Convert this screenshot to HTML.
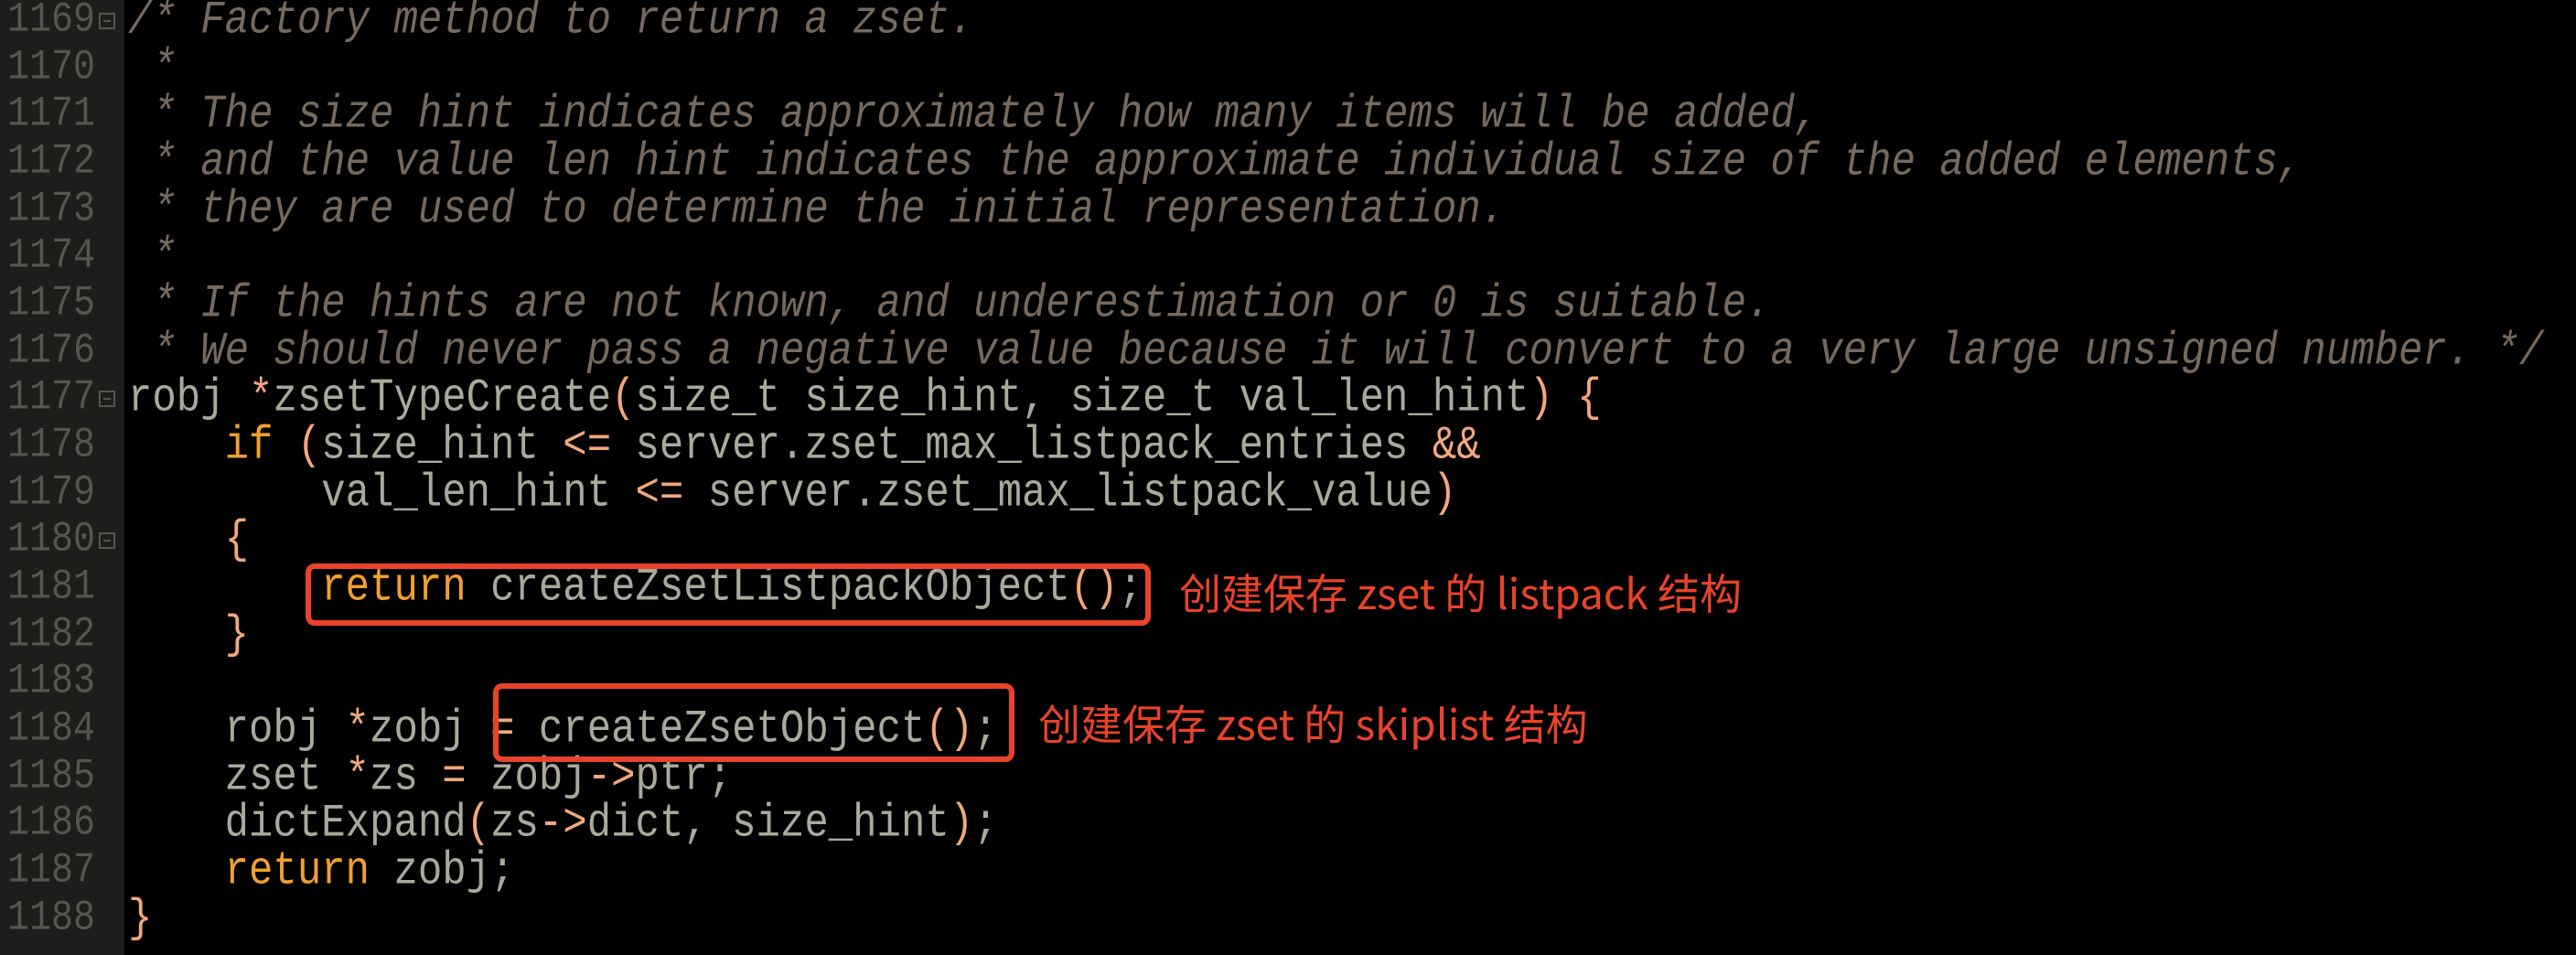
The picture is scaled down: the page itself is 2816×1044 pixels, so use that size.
<!DOCTYPE html>
<html><head><meta charset="utf-8"><style>
body{margin:0;width:2816px;height:1044px;background:#000;overflow:hidden;position:relative;font-family:"Liberation Mono",monospace;}
.g{position:absolute;left:0;top:0;width:136px;height:1044px;background:#1d1d1b;}
.ln{position:absolute;left:0;width:104px;text-align:right;color:#56564f;font-size:40px;height:52px;line-height:52px;transform:scaleY(1.15);}
.f{position:absolute;left:108px;width:18px;height:18px;border:2px solid #56564f;box-sizing:border-box;}
.f:after{content:"";position:absolute;left:3px;right:3px;top:6px;height:2px;background:#56564f;}
.c{position:absolute;left:140px;font-size:44px;white-space:pre;color:#aaa99c;height:52px;line-height:52px;transform:scaleY(1.15);transform-origin:0 50%;}
.cm{color:#76695e;font-style:italic;}
.k{color:#f0a030;}
.o{color:#f2a87c;}
.box{position:absolute;border:6px solid #e8432a;border-radius:10px;box-sizing:border-box;}
.a{position:absolute;color:#e8432a;font-family:"Noto Sans CJK SC",sans-serif;font-size:46px;white-space:nowrap;line-height:60px;}
</style></head><body>
<div class="g"></div>
<div class="c cm" style="top:-3px">/* Factory method to return a zset.</div>
<div class="c cm" style="top:49px"> *</div>
<div class="c cm" style="top:100px"> * The size hint indicates approximately how many items will be added,</div>
<div class="c cm" style="top:152px"> * and the value len hint indicates the approximate individual size of the added elements,</div>
<div class="c cm" style="top:204px"> * they are used to determine the initial representation.</div>
<div class="c cm" style="top:255px"> *</div>
<div class="c cm" style="top:307px"> * If the hints are not known, and underestimation or 0 is suitable.</div>
<div class="c cm" style="top:359px"> * We should never pass a negative value because it will convert to a very large unsigned number. */</div>
<div class="c" style="top:410px">robj <span class="o">*</span>zsetTypeCreate<span class="o">(</span>size_t size_hint, size_t val_len_hint<span class="o">)</span> <span class="o">{</span></div>
<div class="c" style="top:462px">    <span class="k">if</span> <span class="o">(</span>size_hint <span class="o">&lt;=</span> server.zset_max_listpack_entries <span class="o">&amp;&amp;</span></div>
<div class="c" style="top:514px">        val_len_hint <span class="o">&lt;=</span> server.zset_max_listpack_value<span class="o">)</span></div>
<div class="c" style="top:565px">    <span class="o">{</span></div>
<div class="c" style="top:617px">        <span class="k">return</span> createZsetListpackObject<span class="o">()</span>;</div>
<div class="c" style="top:669px">    <span class="o">}</span></div>
<div class="c" style="top:772px">    robj <span class="o">*</span>zobj <span class="o">=</span> createZsetObject<span class="o">()</span>;</div>
<div class="c" style="top:824px">    zset <span class="o">*</span>zs <span class="o">=</span> zobj<span class="o">-&gt;</span>ptr;</div>
<div class="c" style="top:875px">    dictExpand<span class="o">(</span>zs<span class="o">-&gt;</span>dict, size_hint<span class="o">)</span>;</div>
<div class="c" style="top:927px">    <span class="k">return</span> zobj;</div>
<div class="c" style="top:979px"><span class="o">}</span></div>
<div class="ln" style="top:-3px">1169</div><div class="ln" style="top:49px">1170</div><div class="ln" style="top:100px">1171</div><div class="ln" style="top:152px">1172</div><div class="ln" style="top:204px">1173</div><div class="ln" style="top:255px">1174</div><div class="ln" style="top:307px">1175</div><div class="ln" style="top:359px">1176</div><div class="ln" style="top:410px">1177</div><div class="ln" style="top:462px">1178</div><div class="ln" style="top:514px">1179</div><div class="ln" style="top:565px">1180</div><div class="ln" style="top:617px">1181</div><div class="ln" style="top:669px">1182</div><div class="ln" style="top:720px">1183</div><div class="ln" style="top:772px">1184</div><div class="ln" style="top:824px">1185</div><div class="ln" style="top:875px">1186</div><div class="ln" style="top:927px">1187</div><div class="ln" style="top:979px">1188</div>
<div class="f" style="top:14px"></div><div class="f" style="top:427px"></div><div class="f" style="top:582px"></div>
<div class="box" style="left:334px;top:616px;width:924px;height:68px"></div>
<div class="box" style="left:539px;top:747px;width:570px;height:86px"></div>
<div class="a" style="left:1289px;top:617px">创建保存 zset 的 listpack 结构</div>
<div class="a" style="left:1135px;top:760px">创建保存 zset 的 skiplist 结构</div>
</body></html>
